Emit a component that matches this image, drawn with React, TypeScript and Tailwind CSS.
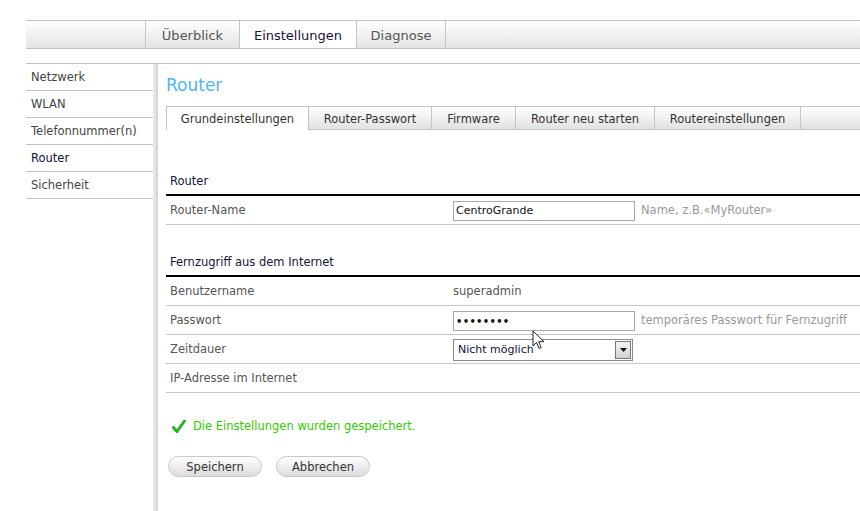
import React from "react";

const FONT = { fontFamily: '"DejaVu Sans", Tahoma, Verdana, sans-serif' };

const topTabs = [
  { label: "Überblick", w: "w-[94px]" },
  { label: "Einstellungen", w: "w-[117px]", active: true },
  { label: "Diagnose", w: "w-[89px]" },
];

const sideItems = ["Netzwerk", "WLAN", "Telefonnummer(n)", "Router", "Sicherheit"];

const subTabs = [
  { label: "Grundeinstellungen", w: "w-[143px]", active: true },
  { label: "Router-Passwort", w: "w-[123px]" },
  { label: "Firmware", w: "w-[84px]" },
  { label: "Router neu starten", w: "w-[139px]" },
  { label: "Routereinstellungen", w: "w-[146px]" },
];

function Row({ label, children }: { label: string; children?: React.ReactNode }) {
  return (
    <div className="flex items-center h-[29px] pt-[2px] border-b border-[#c8c8c8] text-[11.5px] text-[#555]">
      <div className="w-[287px] pl-[4px]">{label}</div>
      <div className="flex items-center flex-1">{children}</div>
    </div>
  );
}

function Section({ title }: { title: string }) {
  return (
    <div className="h-[29px] flex items-end pb-[4px] pl-[4px] border-b-2 border-black text-[11.5px] text-[#14143c]">
      {title}
    </div>
  );
}

export default function App() {
  return (
    <div className="relative w-[860px] h-[511px] bg-white overflow-hidden" style={FONT}>
      {/* top navigation */}
      <div className="ml-[26px] mt-[20px] h-[29px] flex border-y border-[#c4c4c4] bg-gradient-to-b from-white to-[#e4e4e4]">
        <div className="w-[120px] border-r border-[#c4c4c4]" />
        {topTabs.map((t) => (
          <div
            key={t.label}
            className={`${t.w} flex items-center justify-center border-r border-[#c4c4c4] text-[13px] pt-[2px] ${
              t.active ? "bg-white text-[#1a1040]" : "text-[#555]"
            }`}
          >
            {t.label}
          </div>
        ))}
        <div className="flex-1" />
      </div>

      <div className="ml-[26px] mt-[14px] border-t border-[#c4c4c4] flex h-[448px]">
        {/* sidebar */}
        <div className="w-[132px] flex shrink-0">
          <div className="w-[127px]">
            {sideItems.map((s) => (
              <div
                key={s}
                className={`h-[27px] flex items-center pl-[5px] pt-[2px] border-b border-[#c4c4c4] text-[11.5px] ${
                  s === "Router" ? "text-[#10103a]" : "text-[#444] font-medium"
                }`}
              >
                {s}
              </div>
            ))}
          </div>
          <div className="w-[5px] bg-gradient-to-r from-[#f0f0f0] to-[#d0d0d0]" />
        </div>

        {/* main */}
        <div className="flex-1 pl-[8px]">
          <div className="h-[42px] flex items-center pt-[2px] text-[17px] text-[#4fb6f4]">Router</div>

          <div className="h-[24px] flex">
            {subTabs.map((t) => (
              <div
                key={t.label}
                className={`${t.w} flex items-center justify-center pt-[3px] border-r border-[#c4c4c4] text-[11.5px] text-[#333] ${
                  t.active
                    ? "bg-white border-l border-t"
                    : "border-t border-b bg-gradient-to-b from-white to-[#e2e2e2]"
                }`}
              >
                {t.label}
              </div>
            ))}
            <div className="flex-1 border-t border-b border-[#c4c4c4] bg-gradient-to-b from-white to-[#e2e2e2]" />
          </div>

          <div className="mt-[37px]">
            <Section title="Router" />
            <Row label="Router-Name">
              <div className="w-[182px] h-[20px] border border-[#a8a8a8] px-[2px] flex items-center text-[11px] text-[#111]">
                CentroGrande
              </div>
              <span className="ml-[6px] text-[#999]">Name, z.B.«MyRouter»</span>
            </Row>

            <div className="h-[23px]" />
            <Section title="Fernzugriff aus dem Internet" />
            <Row label="Benutzername">
              <span className="text-[#555]">superadmin</span>
            </Row>
            <Row label="Passwort">
              <div className="w-[182px] h-[20px] border border-[#a8a8a8] px-[2px] flex items-center text-[10px] font-bold tracking-[0.3px] text-[#111]">
                ••••••••
              </div>
              <span className="ml-[6px] text-[#999]">temporäres Passwort für Fernzugriff</span>
            </Row>
            <Row label="Zeitdauer">
              <div className="w-[180px] h-[22px] border border-[#8a8a8a] flex items-center">
                <span className="flex-1 pl-[4px] text-[11px] text-[#10103a]">Nicht möglich</span>
                <div className="w-[16px] h-[18px] mr-[1px] border border-[#777] bg-gradient-to-b from-[#f4f4f4] to-[#d0d0d0] flex items-center justify-center">
                  <svg width="7" height="4" viewBox="0 0 7 4">
                    <path d="M0 0h7L3.5 4z" fill="#111" />
                  </svg>
                </div>
              </div>
            </Row>
            <Row label="IP-Adresse im Internet" />
          </div>

          <div className="mt-[25px] flex items-center pl-[6px] text-[11.5px] text-[#33cc00]">
            <svg width="14" height="13" viewBox="0 0 14 13" className="mr-[7px]">
              <path d="M1.5 7.5l3.5 4L12.5 1" stroke="#22b522" strokeWidth="3" fill="none" strokeLinecap="round" strokeLinejoin="round" />
            </svg>
            Die Einstellungen wurden gespeichert.
          </div>

          <div className="mt-[21px] flex gap-[14px] pl-[2px]">
            <button className="w-[94px] h-[21px] pt-[1px] rounded-full border border-[#c8c8c8] bg-gradient-to-b from-white to-[#dcdcdc] text-[11.5px] text-[#333]">
              Speichern
            </button>
            <button className="w-[94px] h-[21px] pt-[1px] rounded-full border border-[#c8c8c8] bg-gradient-to-b from-white to-[#dcdcdc] text-[11.5px] text-[#333]">
              Abbrechen
            </button>
          </div>
        </div>
      </div>

      {/* mouse cursor */}
      <svg className="absolute left-[532px] top-[330px]" width="13" height="20" viewBox="0 0 13 20">
        <path d="M1 1v15l3.5-3.5 2.5 6 2.2-1-2.5-5.8H12z" fill="white" stroke="#222" strokeWidth="1" strokeLinejoin="round" />
      </svg>
    </div>
  );
}
